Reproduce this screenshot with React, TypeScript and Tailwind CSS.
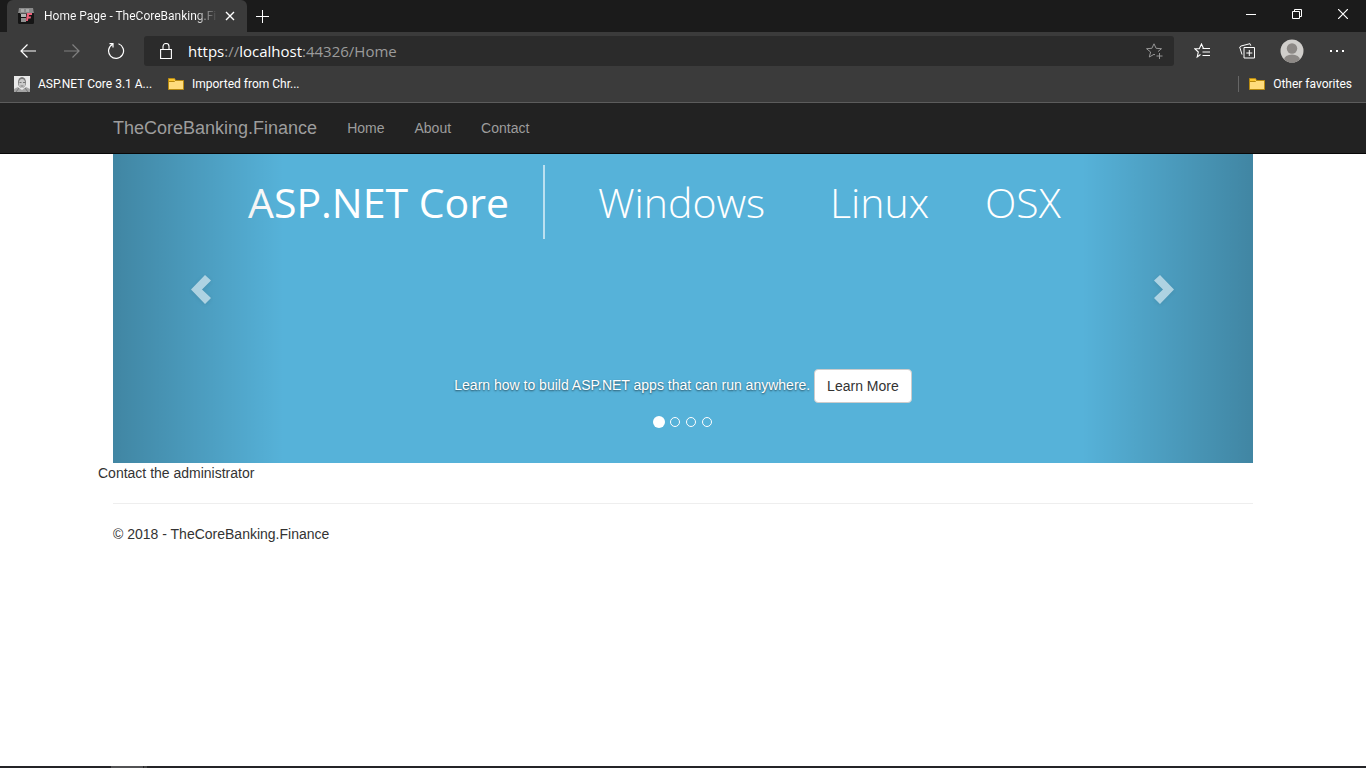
import React from "react";

const uiFont = "font-['Open_Sans','Noto_Sans',sans-serif]";

function Folder() {
  return (
    <svg width="16" height="12" viewBox="0 0 16 12" aria-hidden="true" className="shrink-0">
      <path d="M.5 .5h6l1 2h8v9H.5z" fill="#ffdc7c" stroke="#b88a10" />
      <path d="M1 1h5l.8 2.2H1z" fill="#fbc62f" />
      <path d="M1 3.5h5.5l1-1" fill="none" stroke="#b88a10" />
    </svg>
  );
}

function Portrait() {
  return (
    <svg width="16" height="16" viewBox="0 0 16 16" aria-hidden="true" className="shrink-0">
      <rect width="16" height="16" fill="#e9e9e9" />
      <path d="M0 16v-3l4-2 1 1 3 2 4-3 4 2v3z" fill="#a5a5a5" />
      <ellipse cx="8" cy="6.5" rx="4" ry="5.5" fill="#777" />
      <ellipse cx="8" cy="7.5" rx="3.2" ry="4.5" fill="#c9c9c9" />
      <path d="M5.5 6.5h2M9 6.5h2M6.5 10h3" stroke="#777" />
      <path d="M2 16l3-4M14 16l-3-4" stroke="#777" />
    </svg>
  );
}

function TabIcon() {
  return (
    <svg width="16" height="16" viewBox="0 0 16 16" aria-hidden="true" className="shrink-0">
      <rect y="2" width="16" height="14" rx="1.5" fill="#151515" />
      <path d="M1 0h14l1 5H0z" fill="#8a8a8a" />
      <path d="M3 1h3v3H3zM8 1h3v3H8z" fill="#a9a9a9" />
      <path d="M2 5h7v1H2z" fill="#555" />
      <rect x="3" y="6" width="5" height="3" fill="#b4b4b4" />
      <rect x="3" y="10" width="5" height="4" fill="#8f8f8f" />
      <path d="M9 5h5v2h-3l-.3 1.500H13l-.4 2h-2.200L9.800 13H8z" fill="#f0607a" />
    </svg>
  );
}

function Browser() {
  return (
    <div className={`${uiFont} bg-[#3b3b3b] text-white`}>
      <div className="flex h-8 items-stretch bg-[#1b1b1b] pl-[7px]">
        <div className="flex w-60 items-center rounded-t-md bg-[#3b3b3b] pl-[11px] pr-[9px]">
          <TabIcon />
          <span className="ml-[10px] mr-auto whitespace-nowrap bg-gradient-to-r from-white from-88% to-[#4b4b4b] bg-clip-text font-['Roboto',sans-serif] text-[12px] text-transparent">
            Home Page - TheCoreBanking.Fi
          </span>
          <button aria-label="Close tab" className="flex h-4 w-4 items-center justify-center">
            <svg width="10" height="10" viewBox="0 0 10 10" stroke="#fff" strokeWidth="1.400">
              <path d="M1 1l8 8M9 1L1 9" />
            </svg>
          </button>
        </div>
        <button aria-label="New tab" className="flex w-[31px] items-center justify-center">
          <svg width="13" height="13" viewBox="0 0 13 13" stroke="#fff">
            <path d="M6.500 0v13M0 6.500h13" />
          </svg>
        </button>
        <div className="ml-auto flex pb-1">
          <button aria-label="Minimize" className="flex w-[46px] items-center justify-center">
            <svg width="10" height="10" viewBox="0 0 10 10" stroke="#fff"><path d="M0 5.500h10" /></svg>
          </button>
          <button aria-label="Restore" className="flex w-[46px] items-center justify-center">
            <svg width="10" height="10" viewBox="0 0 10 10" stroke="#fff" fill="none">
              <path d="M.5 2.500h7v7h-7zM2.500 2.500v-2h7v7h-2" />
            </svg>
          </button>
          <button aria-label="Close" className="flex w-[46px] items-center justify-center">
            <svg width="10" height="10" viewBox="0 0 10 10" stroke="#fff" strokeWidth="1.200"><path d="M0 0l10 10M10 0L0 10" /></svg>
          </button>
        </div>
      </div>

      <div className="flex h-[38px] items-center pl-[6px] pr-[6px]">
        <button aria-label="Back" className="flex w-11 justify-center">
          <svg width="16" height="14" viewBox="0 0 16 14" fill="none" stroke="#fff" strokeWidth="1.200">
            <path d="M16 7H1M7.500 .5L1 7l6.500 6.500" />
          </svg>
        </button>
        <button aria-label="Forward" className="flex w-11 justify-center">
          <svg width="16" height="14" viewBox="0 0 16 14" fill="none" stroke="#808080" strokeWidth="1.200">
            <path d="M0 7h15M8.500 .5L15 7l-6.500 6.500" />
          </svg>
        </button>
        <button aria-label="Refresh" className="flex w-11 justify-center">
          <svg width="18" height="18" viewBox="0 0 18 18" fill="none" stroke="#fff" strokeWidth="1.200">
            <path d="M11.500 1.800A7.500 7.500 0 1 1 5.300 2.400M2.500 1.600h3.500v4" />
          </svg>
        </button>
        <div className="ml-[6px] flex h-[30px] flex-1 items-center rounded-[3px] bg-[#2b2b2b] pl-4 pr-[11px]">
          <svg width="12" height="16" viewBox="0 0 12 16" fill="none" stroke="#fff" strokeWidth="1.100" aria-hidden="true">
            <path d="M.6 6.500h10.800v9H.6zM3 6.500V3.500a3 3 0 0 1 6 0v3" />
          </svg>
          <a href="https://localhost:44326/Home" className="ml-4 text-[15px] leading-5 text-[#9b9b9b]">
            <span className="text-white">https</span>://<span className="text-white">localhost</span>:44326/Home
          </a>
          <button aria-label="Add this page to favorites" className="ml-auto">
            <svg width="17" height="16" viewBox="0 0 17 16" fill="none" stroke="#969696">
              <path d="M9 11.800l-1-.5L3.300 14l1.300-5L.5 5.700l5.400-.4L8 .8l2.100 4.500 5.400.4L12 8.600M13.500 10v6M10.500 13h6" />
            </svg>
          </button>
        </div>
        <button aria-label="Favorites" className="ml-[5px] flex w-[45px] justify-center">
          <svg width="16" height="16" viewBox="0 0 16 16" fill="none" stroke="#fff">
            <path d="M6.500 11.500L3.200 14l1.100-5L.8 5.700h4.500L7.500 1l2 4.500H13M8.500 5.500H16M8.500 9H16M8.500 12.500H16" strokeWidth="1.100" />
          </svg>
        </button>
        <button aria-label="Collections" className="flex w-[45px] justify-center">
          <svg width="16" height="16" viewBox="0 0 16 16" fill="none" stroke="#fff">
            <path d="M5 4.500h10.500v10.500H5zM10.300 7v6M7.300 10h6M3 11.500L.7 4 2 3 11 .7l.8 2" />
          </svg>
        </button>
        <button aria-label="Profile" className="flex w-[45px] justify-center">
          <svg width="24" height="24" viewBox="0 0 24 24">
            <clipPath id="avatar"><circle cx="12" cy="12" r="11.500" /></clipPath>
            <circle cx="12" cy="12" r="11.500" fill="#d0cecb" />
            <g clipPath="url(#avatar)" fill="#8d8986">
              <circle cx="12" cy="9.500" r="5.200" />
              <ellipse cx="12" cy="21" rx="8" ry="5.500" />
            </g>
          </svg>
        </button>
        <button aria-label="Settings and more" className="flex w-[46px] justify-center">
          <svg width="16" height="4" viewBox="0 0 16 4" fill="#fff">
            <path d="M1 1h2v2H1zM7 1h2v2H7zM13 1h2v2h-2z" />
          </svg>
        </button>
      </div>

      <div className="flex h-[33px] items-center gap-[18px] border-b border-[#5c5c5c] pb-1 pl-[14px] pr-[14px] font-['Roboto',sans-serif] text-[12px]">
        <a href="#aspnet" className="flex w-[136px] items-center gap-2 whitespace-nowrap"><Portrait />ASP.NET Core 3.1 A...</a>
        <a href="#imported" className="flex items-center gap-2"><Folder />Imported from Chr...</a>
        <a href="#other" className="ml-auto flex h-4 items-center gap-2 border-l border-[#666] pl-[10px]"><Folder />Other favorites</a>
      </div>
    </div>
  );
}

function Carousel() {
  return (
    <section className="relative bg-[#56b2d9] pb-[34px] pt-[11px] text-white">
      <h1 className={`${uiFont} flex h-[74px] items-center whitespace-nowrap pl-[135px] text-[41px] leading-none`}>
        <span className="w-[295px]">ASP.NET Core</span>
        <span className="flex h-full items-center border-l-2 border-white/60 pl-[53px] font-light">
          <span className="w-[232px]">Windows</span>
          <span className="w-[155px]">Linux</span>
          <span>OSX</span>
        </span>
      </h1>
      <div className="mt-[130px] text-center text-[14px] leading-5">
        <p className="[text-shadow:0_1px_2px_rgba(0,0,0,0.6)]">
          Learn how to build ASP.NET apps that can run anywhere.{" "}
          <a href="#learn" className="inline-block rounded-[4px] border border-[#ccc] bg-white px-3 py-[6px] align-middle text-[#333] [text-shadow:none]">
            Learn More
          </a>
        </p>
      </div>
      <div className="mt-3 flex h-[14px] items-center justify-center gap-[6px] pr-[2px]">
        <button aria-label="Slide 1" className="-mr-px h-3 w-3 rounded-full bg-white" />
        <button aria-label="Slide 2" className="h-[10px] w-[10px] rounded-full border border-white" />
        <button aria-label="Slide 3" className="h-[10px] w-[10px] rounded-full border border-white" />
        <button aria-label="Slide 4" className="h-[10px] w-[10px] rounded-full border border-white" />
      </div>
      <button aria-label="Previous" className="absolute inset-y-0 left-0 flex w-[15%] items-center justify-center bg-linear-to-r/srgb from-black/25 to-transparent pb-[39px] pl-[5px]">
        <svg width="20" height="29" viewBox="0 0 20 29" fill="#fff" className="opacity-55 drop-shadow-sm">
          <path d="M0 14.500L14 0l6 5.500-9 9 9 8.500-6 6z" />
        </svg>
      </button>
      <button aria-label="Next" className="absolute inset-y-0 right-0 flex w-[15%] items-center justify-center bg-linear-to-l/srgb from-black/25 to-transparent pb-[39px] pr-[7px]">
        <svg width="20" height="29" viewBox="0 0 20 29" fill="#fff" className="opacity-55 drop-shadow-sm">
          <path d="M20 14.500L6 0 0 5.500l9 9L0 23l6 6z" />
        </svg>
      </button>
    </section>
  );
}

export default function App() {
  return (
    <div className="flex min-h-screen flex-col bg-white font-['Liberation_Sans',Arial,sans-serif] text-[14px] leading-5 text-[#333]">
      <Browser />
      <nav className="border-b border-[#080808] bg-[#222] text-[#9d9d9d]">
        <div className="mx-auto flex h-[50px] max-w-[1170px] items-center px-[15px]">
          <a href="#home" className="mr-[15px] text-[18px]">TheCoreBanking.Finance</a>
          <a href="#home" className="px-[15px]">Home</a>
          <a href="#about" className="px-[15px]">About</a>
          <a href="#contact" className="px-[15px]">Contact</a>
        </div>
      </nav>
      <main className="mx-auto w-full max-w-[1170px]">
        <div className="px-[15px]"><Carousel /></div>
        <p>Contact the administrator</p>
        <footer className="mx-[15px] mt-5 border-t border-[#eee] pt-5">
          <p>© 2018 - TheCoreBanking.Finance</p>
        </footer>
      </main>
      <div className="mt-auto flex h-[2px] bg-[#242427] pl-[111px]">
        <span className="w-8 bg-[#525254]" />
        <span className="ml-px w-[3px] bg-[#444446]" />
      </div>
    </div>
  );
}
